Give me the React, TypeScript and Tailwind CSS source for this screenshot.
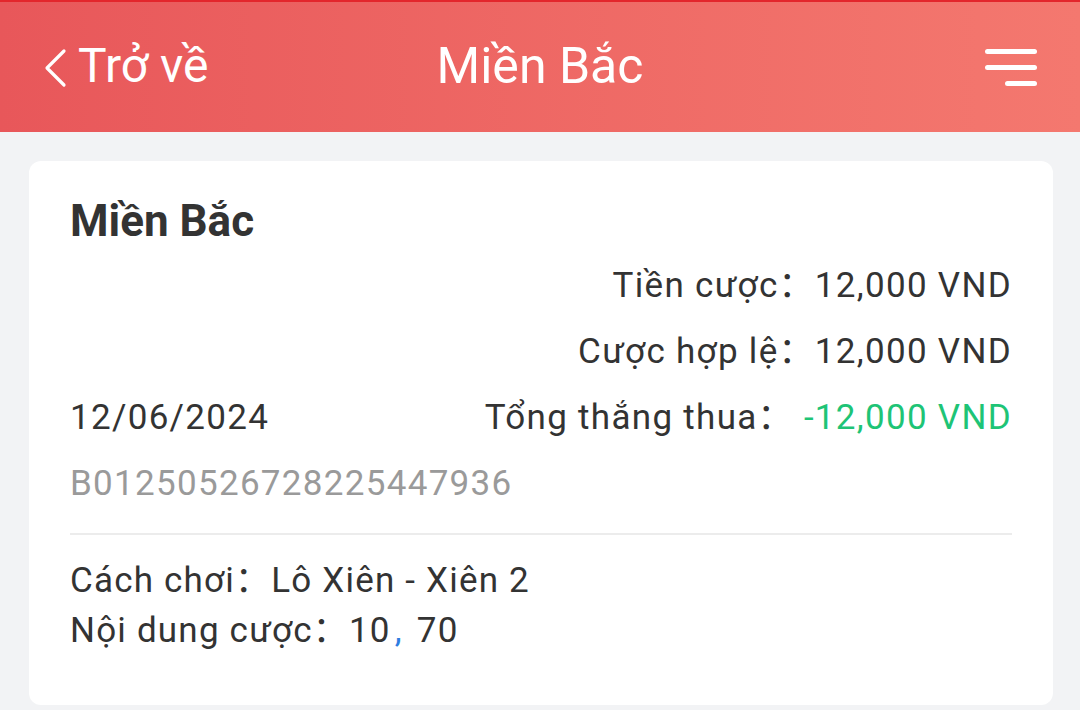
import React from "react";

type Row = { label: string; value: string };

const rows: Row[] = [
  { label: "Tiền cược", value: "12,000 VND" },
  { label: "Cược hợp lệ", value: "12,000 VND" },
];

function Header() {
  return (
    <div className="h-[132px] border-t-2 border-[#e3262c] bg-gradient-to-r from-[#e8575a] to-[#f4786f] flex items-center px-[42px] text-white relative">
      <div className="flex items-center gap-[10px]">
        <svg width="26" height="40" viewBox="0 0 26 40" fill="none" className="mt-[2px]">
          <path d="M22 3 L5 20 L22 37" stroke="white" strokeWidth="3.2" strokeLinecap="round" strokeLinejoin="round" />
        </svg>
        <span className="text-[48px] leading-none pb-[2px]">Trở về</span>
      </div>
      <div className="absolute inset-0 flex items-center justify-center pointer-events-none">
        <span className="text-[50px] leading-none pb-[2px]">Miền Bắc</span>
      </div>
      <div className="ml-auto flex flex-col items-end gap-[11px] pr-[1px]">
        <span className="block h-[5px] w-[52px] rounded-full bg-white" />
        <span className="block h-[5px] w-[52px] rounded-full bg-white" />
        <span className="block h-[5px] w-[32px] rounded-full bg-white" />
      </div>
    </div>
  );
}

export default function App() {
  return (
    <div className="w-[1080px] h-[710px] overflow-hidden bg-[#f2f3f5] font-['Roboto','Noto_Sans_CJK_SC',sans-serif] text-[#333333]">
      <Header />
      <div className="pl-[29px] pr-[27px] pt-[29px]">
        <div className="bg-white rounded-[12px] px-[41px] pt-[32px] pb-[49px]">
          <h2 className="text-[44px] leading-[56px] font-bold">Miền Bắc</h2>
          <div className="mt-[4px] text-[35px] leading-[66px] tracking-[1.3px]">
            {rows.map((r) => (
              <div key={r.label} className="flex justify-end">
                <span>{r.label}：</span>
                <span>{r.value}</span>
              </div>
            ))}
            <div className="flex">
              <span>12/06/2024</span>
              <span className="ml-auto">Tổng thắng thua：</span>
              <span className="ml-[10px] text-[#1ec476]">-12,000 VND</span>
            </div>
            <div className="text-[#9a9a9a]">B01250526728225447936</div>
          </div>
          <div className="mt-[16px] h-[2px] bg-[#ececec]" />
          <div className="mt-[21px] text-[35px] leading-[50px] tracking-[1.2px]">
            <div>Cách chơi：Lô Xiên - Xiên 2</div>
            <div>
              Nội dung cược：10<span className="text-[#2f7ee0] ml-[4px] mr-[14px]">,</span>70
            </div>
          </div>
        </div>
      </div>
    </div>
  );
}
